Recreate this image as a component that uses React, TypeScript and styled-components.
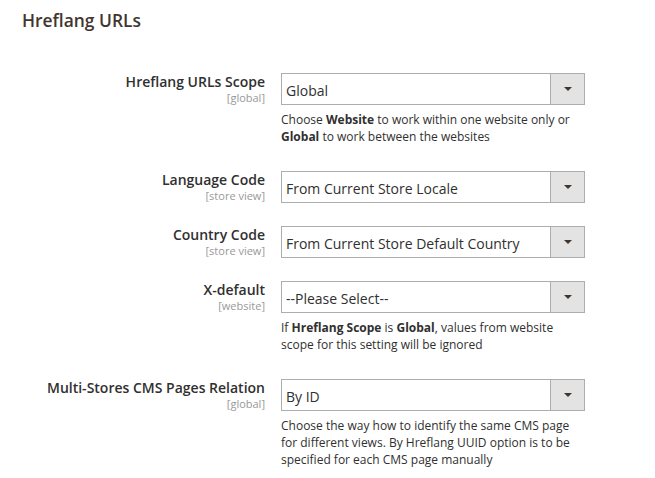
import React from 'react'
import styled, { createGlobalStyle } from 'styled-components'

const GlobalStyle = createGlobalStyle`
  html, body {
    margin: 0;
    padding: 0;
    background: #fff;
  }
  body {
    font-family: 'Open Sans', 'Liberation Sans', sans-serif;
    color: #303030;
  }
`

const Page = styled.div`
  padding: 0 22px;
`

const SectionTitle = styled.h2`
  margin: 9px 0 0 0;
  font-size: 17.4px;
  line-height: 22px;
  font-weight: 600;
  color: #41362f;
`

const FieldList = styled.div`
  display: flex;
  flex-direction: column;
  padding-top: 42px;
`

const Row = styled.div<{ $first?: boolean }>`
  display: grid;
  grid-template-columns: 243px 304px;
  column-gap: 16px;
  margin-top: ${({ $first }) => ($first ? '0' : '23px')};
`

const LabelCell = styled.div`
  display: flex;
  flex-direction: column;
  align-items: flex-end;
  text-align: right;
`

const Label = styled.label`
  font-size: 14px;
  line-height: 18px;
  font-weight: 600;
  color: #303030;
  white-space: nowrap;
`

const Scope = styled.span`
  font-size: 11px;
  line-height: 13px;
  color: #999;
`

const ControlCell = styled.div`
  display: flex;
  flex-direction: column;
`

const SelectBox = styled.div`
  display: flex;
  height: 32px;
  box-sizing: border-box;
  border: 1px solid #adadad;
  background: #fff;
`

const SelectValue = styled.span`
  flex: 1;
  display: flex;
  align-items: center;
  padding: 2px 0 0 4px;
  font-size: 14px;
  color: #303030;
  white-space: nowrap;
`

const ArrowButton = styled.span`
  width: 33px;
  display: flex;
  align-items: center;
  justify-content: center;
  background: #e3e3e3;
  border-left: 1px solid #adadad;
`

const Arrow = styled.span`
  width: 0;
  height: 0;
  border-left: 4px solid transparent;
  border-right: 4px solid transparent;
  border-top: 4px solid #41362f;
`

const Note = styled.div<{ $last?: boolean }>`
  margin-top: 6px;
  padding-bottom: ${({ $last }) => ($last ? '0' : '3px')};
  font-size: 12px;
  line-height: 17px;
  color: #303030;
  white-space: nowrap;

  b {
    font-weight: 700;
  }
`

type Field = {
  label: string
  scope: string
  value: string
  note?: React.ReactNode
}

const fields: Field[] = [
  {
    label: 'Hreflang URLs Scope',
    scope: '[global]',
    value: 'Global',
    note: (
      <>
        Choose <b>Website</b> to work within one website only or
        <br />
        <b>Global</b> to work between the websites
      </>
    ),
  },
  { label: 'Language Code', scope: '[store view]', value: 'From Current Store Locale' },
  { label: 'Country Code', scope: '[store view]', value: 'From Current Store Default Country' },
  {
    label: 'X-default',
    scope: '[website]',
    value: '--Please Select--',
    note: (
      <>
        If <b>Hreflang Scope</b> is <b>Global</b>, values from website
        <br />
        scope for this setting will be ignored
      </>
    ),
  },
  {
    label: 'Multi-Stores CMS Pages Relation',
    scope: '[global]',
    value: 'By ID',
    note: (
      <>
        Choose the way how to identify the same CMS page
        <br />
        for different views. By Hreflang UUID option is to be
        <br />
        specified for each CMS page manually
      </>
    ),
  },
]

export default function App() {
  return (
    <>
      <GlobalStyle />
      <Page>
        <SectionTitle>Hreflang URLs</SectionTitle>
        <FieldList>
          {fields.map((field, index) => (
            <Row key={field.label} $first={index === 0}>
              <LabelCell>
                <Label>{field.label}</Label>
                <Scope>{field.scope}</Scope>
              </LabelCell>
              <ControlCell>
                <SelectBox>
                  <SelectValue>{field.value}</SelectValue>
                  <ArrowButton>
                    <Arrow />
                  </ArrowButton>
                </SelectBox>
                {field.note && (
                  <Note $last={index === fields.length - 1}>{field.note}</Note>
                )}
              </ControlCell>
            </Row>
          ))}
        </FieldList>
      </Page>
    </>
  )
}
